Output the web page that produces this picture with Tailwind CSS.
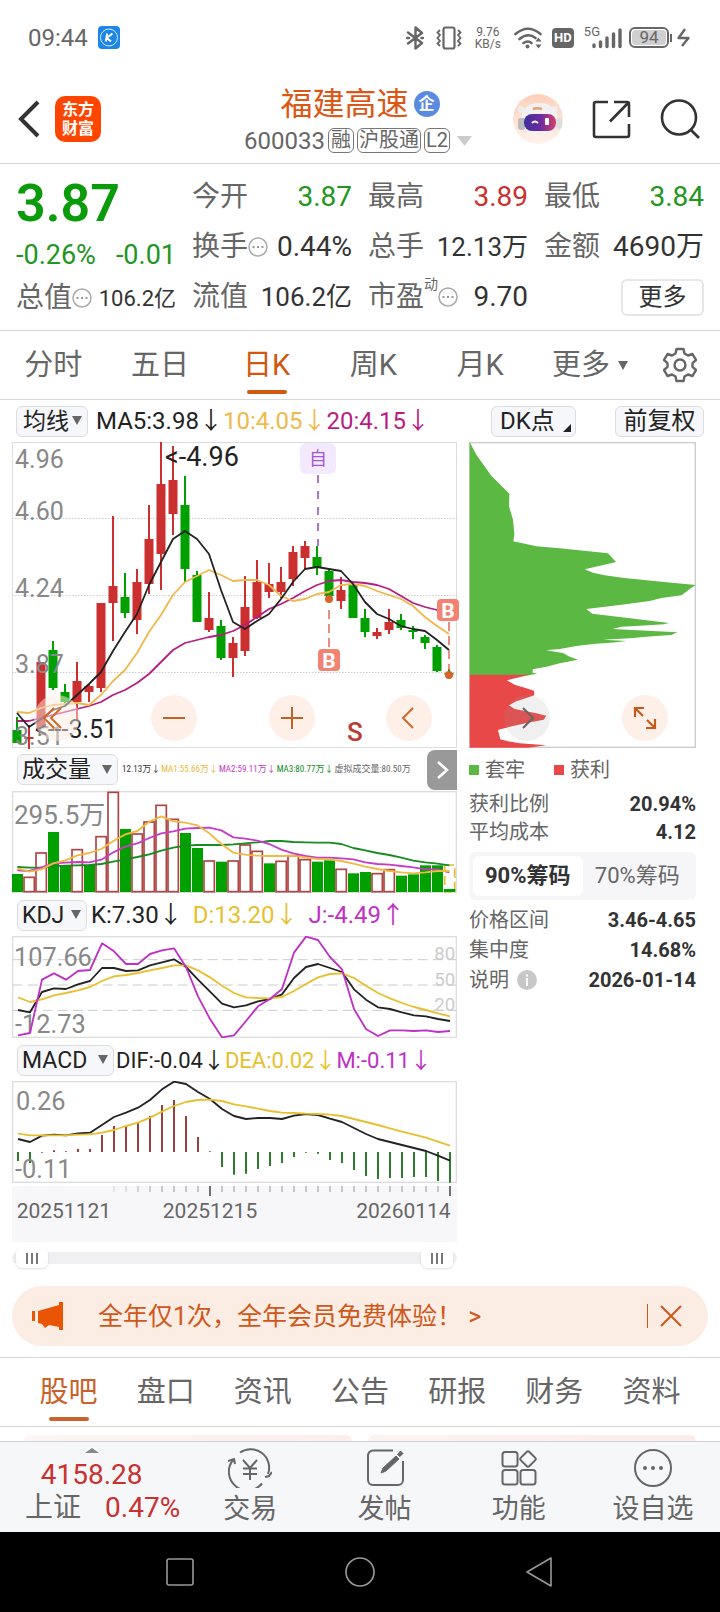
<!DOCTYPE html>
<html lang="zh-CN">
<head>
    <meta charset="UTF-8">
    <meta name="viewport" content="width=device-width, initial-scale=1.0">
    <title>福建高速 600033</title>
    <script src="https://cdn.jsdelivr.net/npm/@tailwindcss/browser@4"></script>
</head>
<body class="bg-white text-[#666] font-[Roboto,'Noto_Sans_CJK_SC',sans-serif] overflow-x-hidden">

    <!-- status bar -->
    <div class="flex items-center h-[75px] pl-7 pr-[30px]">
      <span class="text-2xl">09:44</span>
      <svg class="ml-[10px] w-[22px] h-[23px]" viewBox="0 0 22 23">
        <rect width="22" height="23" rx="4" fill="#1b86e8"/>
        <circle cx="11" cy="11.500" r="8.500" fill="none" stroke="#d6eaff" stroke-width="1"/>
        <path d="M9.200 7.500L7.800 15.500M14.500 7.500L8.800 12L13 15.500" fill="none" stroke="#fff" stroke-width="2"/>
      </svg>
      <div class="ml-auto flex items-center">
        <svg class="w-[18px] h-6" viewBox="0 0 18 24" fill="none" stroke="#666" stroke-width="2.400" stroke-linejoin="round" stroke-linecap="round"><path d="M2 6.500L16 17L9.500 22.500V1.500L16 7L2 17.500M1 12h2M15.500 12h1.500"/></svg>
        <svg class="ml-3 w-[26px] h-6" viewBox="0 0 26 24" fill="none" stroke="#666" stroke-width="2.200"><rect x="7.500" y="1.500" width="11" height="21" rx="2"/><path d="M4 4L1.500 6.500L4 9L1.500 12L4 15L1.500 17.500L4 20M22 4l2.500 2.500L22 9l2.500 3L22 15l2.500 2.500L22 20" stroke-width="1.800"/></svg>
        <div class="ml-3 w-7 text-xs leading-3 text-center">9.76<br>KB/s</div>
        <svg class="ml-3 w-[28px] h-6" viewBox="0 0 28 24" fill="none" stroke="#666" stroke-width="2.600" stroke-linecap="round"><path d="M1.500 8Q14-2.500 26.500 8M5.500 13Q14 6 21.500 12M9.500 17Q14 14 17.500 17"/><circle cx="13.500" cy="20.500" r="2" fill="#666" stroke="none"/><path d="M24.500 11.500l3 4h-6zM24.500 22.500l3-4h-6z" fill="#666" stroke="none"/></svg>
        <span class="ml-[10px] w-[22px] h-5 rounded-sm bg-[#666] text-white text-[13px] leading-5 font-bold text-center">HD</span>
        <span class="ml-[10px] text-[13px] leading-3 self-start">5G</span>
        <svg class="-ml-2 w-[30px] h-[22px]" viewBox="0 0 30 22" stroke="#666" stroke-width="3.400" stroke-linecap="round"><path d="M2 18v1.500M8.500 15v4.500M15 11v8.500M21.500 7v12.500M28 3v16.500"/></svg>
        <span class="ml-[7px] w-[40px] h-[21px] rounded-md border-2 border-[#666] p-px"><span class="block bg-[#d0d0d0] rounded-sm text-[17px] leading-[15px] text-center">94</span></span>
        <span class="w-[2px] h-2 bg-[#666] ml-px"></span>
        <svg class="ml-[5px] w-[13px] h-[19px]" viewBox="0 0 13 19" fill="none" stroke="#666" stroke-width="2.400" stroke-linejoin="round"><path d="M8 1L1.500 10H11.500L5 18"/></svg>
      </div>
    </div>

    <!-- header -->
    <header class="grid grid-cols-[1fr_auto_1fr] items-center h-[89px] border-b border-[#d8d8d8] pl-4 pr-5">
      <div class="flex items-center gap-[15px]">
        <button aria-label="返回"><svg class="w-6 h-10" viewBox="0 0 24 40" fill="none" stroke="#333" stroke-width="4"><path d="M22 3L5 20L22 37"/></svg></button>
        <button class="w-[46px] h-[46px] rounded-[10px] bg-[#ff4600] text-white text-base leading-[19px] font-bold">东方<br>财富</button>
      </div>
      <div class="flex flex-col items-center pt-[7px]">
        <h1 class="flex items-center gap-[5px] pl-1 text-[#dc5614] text-[32px] leading-9">福建高速<span class="w-[26px] h-[26px] rounded-full bg-[#5b8be0] text-white text-base leading-[25px] text-center font-bold">企</span></h1>
        <div class="flex items-center gap-[3px] text-2xl leading-[38px]">600033
          <span class="border border-[#777] rounded-md w-[26px] h-[25px] text-[20px] leading-[22px] text-center">融</span>
          <span class="border border-[#777] rounded-md w-[64px] h-[25px] text-[20px] leading-[22px] text-center">沪股通</span>
          <span class="border border-[#777] rounded-md w-[26px] h-[25px] text-[20px] leading-[23px] text-center">L2</span>
          <svg class="ml-1 w-[15px] h-[10px]" viewBox="0 0 15 10"><path d="M0 0h15L7.500 10z" fill="#ccc"/></svg>
        </div>
      </div>
      <div class="flex items-center justify-end gap-[29px]">
        <button aria-label="智能助手"><svg class="w-[50px] h-[50px]" viewBox="0 0 50 50">
          <defs><linearGradient id="visor"><stop offset="0" stop-color="#3d2f9a"/><stop offset="0.500" stop-color="#6a2aa0"/><stop offset="1" stop-color="#d2406a"/></linearGradient><linearGradient id="halo" x2="0" y2="1"><stop offset="0" stop-color="#fcd0bb"/><stop offset="1" stop-color="#fff3ec"/></linearGradient></defs>
          <circle cx="25" cy="25" r="25" fill="url(#halo)"/>
          <path d="M6 19Q3 10 9 12L16 17ZM44 19Q47 10 41 12L34 17Z" fill="#eee"/>
          <path d="M8 26Q9 9 26 9Q43 9 45 26Q44 41 26 41Q9 41 8 26Z" fill="#f2f0f0"/>
          <rect x="5" y="24" width="7" height="12" rx="3" fill="#bbb"/><rect x="43" y="24" width="6" height="11" rx="3" fill="#ddd"/>
          <rect x="11" y="20" width="32" height="17" rx="8" fill="url(#visor)"/>
          <path d="M20 15Q24 13.500 29 15" stroke="#e3a070" stroke-width="2.500" fill="none"/>
          <path d="M19 29q3-3 6 0" stroke="#fff" stroke-width="2" fill="none"/><rect x="32" y="24" width="4" height="7" rx="1" fill="#fff"/>
        </svg></button>
        <button aria-label="分享"><svg class="w-[39px] h-[39px]" viewBox="0 0 39 39" fill="none" stroke="#333" stroke-width="2.600"><path d="M16 2H4a2 2 0 0 0-2 2v31a2 2 0 0 0 2 2h31a2 2 0 0 0 2-2V24M22 2h13a2 2 0 0 1 2 2v13M37 2L18 21.500"/></svg></button>
        <button aria-label="搜索"><svg class="w-10 h-10" viewBox="0 0 40 40" fill="none" stroke="#333" stroke-width="2.600"><circle cx="19" cy="18.500" r="17"/><path d="M31 31L39 39"/></svg></button>
      </div>
    </header>

    <!-- quote -->
    <section class="grid grid-cols-4 gap-4 px-4 py-2 h-[167px] border-b border-[#d8d8d8] whitespace-nowrap">
      <div>
        <div class="h-[62px] leading-[64px] text-[52px] font-semibold text-[#0a9b0a]">3.87</div>
        <div class="h-10 leading-[42px] flex justify-between text-[27px] text-[#229522]"><span>-0.26%</span><span>-0.01</span></div>
        <div class="h-12 flex items-center justify-between"><span class="flex items-center text-[28px]">总值<svg class="w-5 h-5" viewBox="0 0 20 20"><circle cx="10" cy="10" r="9" fill="none" stroke="#aaa" stroke-width="1.500"/><path d="M4.500 9h2v2h-2zM9 9h2v2H9zM13.500 9h2v2h-2z" fill="#999"/></svg></span><span class="text-[22px] text-[#333]">106.2亿</span></div>
      </div>
      <div>
        <div class="h-[50px] flex items-center justify-between text-[28px]"><span>今开</span><span class="text-[#229522]">3.87</span></div>
        <div class="h-[50px] flex items-center justify-between text-[28px]"><span class="flex items-center">换手<svg class="w-5 h-5" viewBox="0 0 20 20"><circle cx="10" cy="10" r="9" fill="none" stroke="#aaa" stroke-width="1.500"/><path d="M4.500 9h2v2h-2zM9 9h2v2H9zM13.500 9h2v2h-2z" fill="#999"/></svg></span><span class="text-[#333]">0.44%</span></div>
        <div class="h-[50px] flex items-center justify-between text-[28px]"><span>流值</span><span class="text-[26px] text-[#333]">106.2亿</span></div>
      </div>
      <div>
        <div class="h-[50px] flex items-center justify-between text-[28px]"><span>最高</span><span class="text-[#c93030]">3.89</span></div>
        <div class="h-[50px] flex items-center justify-between text-[28px]"><span>总手</span><span class="text-[26px] text-[#333]">12.13万</span></div>
        <div class="h-[50px] flex items-center justify-between text-[28px]"><span class="flex items-center">市盈<span class="text-sm self-start leading-4">动</span><svg class="w-5 h-5" viewBox="0 0 20 20"><circle cx="10" cy="10" r="9" fill="none" stroke="#aaa" stroke-width="1.500"/><path d="M4.500 9h2v2h-2zM9 9h2v2H9zM13.500 9h2v2h-2z" fill="#999"/></svg></span><span class="text-[#333]">9.70</span></div>
      </div>
      <div>
        <div class="h-[50px] flex items-center justify-between text-[28px]"><span>最低</span><span class="text-[#229522]">3.84</span></div>
        <div class="h-[50px] flex items-center justify-between text-[28px]"><span>金额</span><span class="text-[#333]">4690万</span></div>
        <div class="h-[50px] flex items-center justify-end"><button class="w-[83px] h-[37px] rounded-md border-2 border-[#e6e6e6] text-2xl leading-8 text-[#333]">更多</button></div>
      </div>
    </section>

    <!-- period tabs -->
    <nav class="grid grid-cols-[1fr_1fr_1fr_1fr_1fr_1fr_80px] items-center h-[69px] border-b border-[#d8d8d8] text-[29px] leading-[66px]">
      <button>分时</button>
      <button>五日</button>
      <button class="relative text-[#d1590f]">日K<span class="absolute bottom-1 left-1/2 -translate-x-1/2 w-10 h-1 rounded-full bg-[#d1590f]"></span></button>
      <button>周K</button>
      <button>月K</button>
      <button class="flex items-center justify-end gap-2 pr-3">更多<svg class="w-[10px] h-[9px]" viewBox="0 0 10 9"><path d="M0 0h10L5 9z" fill="#666"/></svg></button>
      <button class="flex justify-center" aria-label="设置"><svg class="w-[34px] h-[36px]" viewBox="0 0 34 36" fill="none" stroke="#666" stroke-width="2.400" stroke-linejoin="round"><path d="M13.500 2h7l1 4.500 3.500 2 4.500-1.500 3.500 6-3.500 3.200v3.600l3.500 3.200-3.500 6-4.500-1.500-3.500 2-1 4.500h-7l-1-4.500-3.500-2L4.500 29 1 23l3.500-3.200v-3.600L1 13l3.500-6L9 8.500l3.500-2z"/><circle cx="17" cy="18" r="5.500"/></svg></button>
    </nav>

    <main class="pl-3 pr-4">
      <div class="flex items-center h-[42px] text-2xl whitespace-nowrap">
        <label class="relative ml-1">
          <select aria-label="主图指标" class="appearance-none w-[72px] h-[31px] pl-[6px] rounded-md border border-[#ddd] bg-[#f6f7fa] text-[23px] leading-7 text-[#222]"><option>均线</option></select>
          <svg class="absolute right-[6px] top-[11px] w-[10px] h-[9px] pointer-events-none" viewBox="0 0 10 9"><path d="M0 0h10L5 9z" fill="#666"/></svg>
        </label>
        <span class="ml-2 text-[#222]">MA5:3.98↓</span><span class="text-[#f0b84c]">10:4.05↓</span><span class="text-[#b81e82]">20:4.15↓</span>
        <button class="relative ml-auto w-[85px] h-[31px] pl-2 rounded-md border border-[#ddd] bg-[#f6f7fa] text-left leading-7 text-[#222]">DK点<svg class="absolute right-1 bottom-1 w-2 h-2" viewBox="0 0 8 8"><path d="M8 0v8H0z" fill="#222"/></svg></button>
        <button class="ml-[39px] w-[89px] h-[31px] rounded-md border border-[#ddd] bg-[#f6f7fa] leading-7 text-[#222]">前复权</button>
      </div>

      <div class="grid grid-cols-[445fr_235fr] gap-3">
        <div>
          <!-- candles -->
          <div class="relative">
            <svg class="block w-full overflow-visible" viewBox="12 442 445 306" font-size="25">
              <rect x="12.500" y="442.500" width="444" height="305" fill="none" stroke="#ddd"/>
              <path d="M12 518.500H457M12 595.500H457M12 672.500H457" stroke="#ccc" stroke-dasharray="1.500 1.500"/>
              <g id="candles"></g>
              <g fill="#888"><text x="15" y="468">4.96</text><text x="15" y="520">4.60</text><text x="15" y="597">4.24</text><text x="15" y="673">3.87</text><text x="15" y="745">3.51</text></g>
              <g fill="#222"><text x="165" y="466" font-size="27">&lt;-4.96</text><text x="35" y="738">&lt;---3.51</text></g>
              <rect x="300" y="443" width="36" height="31" rx="6" fill="#f3eaff"/>
              <text x="318" y="465" text-anchor="middle" font-size="18" fill="#a257d0">自</text>
              <path d="M318 475V546" stroke="#a56cc4" stroke-width="1.800" stroke-dasharray="8 8"/>
              <path d="M329 610V649M449 622V670" stroke="#e06a55" stroke-width="1.500" stroke-dasharray="9 5"/>
              <circle cx="329" cy="599" r="4" fill="#d8642a"/><circle cx="449" cy="675" r="4" fill="#d8642a"/>
              <rect x="318" y="649" width="22" height="22" rx="4" fill="#f28373"/><rect x="437" y="599" width="22" height="22" rx="4" fill="#f28373"/>
              <g fill="#fff" font-size="21" font-weight="700" text-anchor="middle"><text x="329" y="668">B</text><text x="448" y="618">B</text></g>
              <text x="347" y="741" font-size="26" font-weight="500" fill="#bb3a34">S</text>
            </svg>
            <div class="absolute bottom-[7px] left-[22px] right-[25px] flex justify-between">
              <button aria-label="最早" class="w-[46px] h-[46px] rounded-full bg-[#fdece3]/50"><svg viewBox="0 0 46 46" fill="none" stroke="#d1692b" stroke-width="2"><path d="M20 13L10 23L20 33M27 13L17 23L27 33"/></svg></button>
              <button aria-label="缩小" class="w-[46px] h-[46px] rounded-full bg-[#fef0e9]"><svg viewBox="0 0 46 46" stroke="#c0622a" stroke-width="2"><path d="M12 23H34"/></svg></button>
              <button aria-label="放大" class="w-[46px] h-[46px] rounded-full bg-[#fef0e9]"><svg viewBox="0 0 46 46" stroke="#c0622a" stroke-width="2"><path d="M12 23H34M23 12V34"/></svg></button>
              <button aria-label="向左" class="w-[46px] h-[46px] rounded-full bg-[#fef0e9]"><svg viewBox="0 0 46 46" fill="none" stroke="#d1692b" stroke-width="2"><path d="M27 13L17 23L27 33"/></svg></button>
            </div>
          </div>

          <!-- volume -->
          <div class="flex items-center h-[43px] whitespace-nowrap">
            <label class="relative ml-[5px]">
              <select aria-label="副图指标一" class="appearance-none w-[101px] h-[31px] pl-1 rounded-md border border-[#ddd] bg-[#f6f7fa] text-[23px] leading-7 text-[#222]"><option>成交量</option></select>
              <svg class="absolute right-[6px] top-[11px] w-[10px] h-[9px] pointer-events-none" viewBox="0 0 10 9"><path d="M0 0h10L5 9z" fill="#666"/></svg>
            </label>
            <div class="flex gap-px ml-1 text-[9px] font-['Roboto_Condensed','Liberation_Sans_Narrow',Roboto,'Noto_Sans_CJK_SC',sans-serif]">
              <span class="text-[#333]">12.13万↓</span><span class="text-[#e8b93c]">MA1:55.66万↓</span><span class="text-[#bf3cc4]">MA2:59.11万↓</span><span class="text-[#0d8a1c]">MA3:80.77万↓</span><span>虚拟成交量:80.50万</span>
            </div>
            <button aria-label="展开" class="ml-auto w-[30px] h-10 rounded-l-lg bg-[#999]"><svg viewBox="0 0 30 40" fill="none" stroke="#fff" stroke-width="2.600"><path d="M11 12L20 20L11 28"/></svg></button>
          </div>
          <svg class="block w-full" viewBox="36 123 1335 306" font-size="78">
            <rect x="38" y="125" width="1331" height="302" fill="none" stroke="#ddd" stroke-width="4"/>
            <text x="42" y="222" fill="#888">295.5万</text>
            <g id="volume"></g>
          </svg>

          <!-- KDJ -->
          <div class="flex items-center h-[43px] pt-px text-2xl whitespace-nowrap">
            <label class="relative ml-[5px]">
              <select aria-label="副图指标二" class="appearance-none w-[70px] h-[31px] pl-1 rounded-md border border-[#ddd] bg-[#f6f7fa] text-[23px] leading-7 text-[#222]"><option>KDJ</option></select>
              <svg class="absolute right-[6px] top-[11px] w-[10px] h-[9px] pointer-events-none" viewBox="0 0 10 9"><path d="M0 0h10L5 9z" fill="#666"/></svg>
            </label>
            <div class="flex gap-[10px] ml-1"><span class="text-[#222]">K:7.30↓</span><span class="text-[#e8bf2f]">D:13.20↓</span><span class="text-[#bf30c6]">J:-4.49↑</span></div>
          </div>
          <svg class="block w-full" viewBox="36 557 1335 306" font-size="76">
            <rect x="38" y="559" width="1331" height="302" fill="none" stroke="#ddd" stroke-width="4"/>
            <path d="M38 628H1369M38 704H1369M38 780H1369" stroke="#ccc" stroke-width="3" stroke-dasharray="30 15"/>
            <g fill="#888"><text x="42" y="647">107.66</text><text x="45" y="848">-12.73</text></g>
            <g fill="#ccc" font-size="56"><text x="1303" y="630">80</text><text x="1303" y="706">50</text><text x="1303" y="782">20</text></g>
            <g id="kdj"></g>
          </svg>

          <!-- MACD -->
          <div class="flex items-center h-[43px] pt-px text-[22px] whitespace-nowrap">
            <label class="relative ml-[5px]">
              <select aria-label="副图指标三" class="appearance-none w-[97px] h-[31px] pl-1 rounded-md border border-[#ddd] bg-[#f6f7fa] text-[23px] leading-7 text-[#222]"><option>MACD</option></select>
              <svg class="absolute right-[6px] top-[11px] w-[10px] h-[9px] pointer-events-none" viewBox="0 0 10 9"><path d="M0 0h10L5 9z" fill="#666"/></svg>
            </label>
            <div class="flex ml-[2px]"><span class="text-[#222]">DIF:-0.04↓</span><span class="text-[#e8bf2f]">DEA:0.02↓</span><span class="text-[#bf30c6]">M:-0.11↓</span></div>
          </div>
          <svg class="block w-full" viewBox="36 138 1335 306" font-size="76">
            <rect x="38" y="140" width="1331" height="302" fill="none" stroke="#ddd" stroke-width="4"/>
            <g id="macd"></g>
            <g fill="#888"><text x="48" y="226">0.26</text><text x="45" y="429">-0.11</text></g>
          </svg>

          <!-- time axis -->
          <svg class="block w-full mt-[3px] bg-[#f7f7fa]" viewBox="36 453 1335 168" font-size="63" fill="#666">
            <g id="ticks"></g>
            <text x="50" y="549">20251121</text><text x="630" y="549" text-anchor="middle">20251215</text><text x="1352" y="549" text-anchor="end">20260114</text>
          </svg>
          <div class="relative mt-[6px] h-5">
            <div class="absolute inset-x-0 top-1 h-3 rounded-full bg-[#f0f0f3]"></div>
            <input type="range" value="0" aria-label="起始日期" class="absolute inset-x-1 top-0 h-5 w-[calc(100%-8px)] appearance-none bg-transparent pointer-events-none [&::-webkit-slider-thumb]:pointer-events-auto [&::-webkit-slider-thumb]:appearance-none [&::-webkit-slider-thumb]:w-8 [&::-webkit-slider-thumb]:h-5 [&::-webkit-slider-thumb]:rounded-md [&::-webkit-slider-thumb]:shadow [&::-webkit-slider-thumb]:bg-white [&::-webkit-slider-thumb]:bg-[repeating-linear-gradient(90deg,#777_0_2px,transparent_2px_5px)] [&::-webkit-slider-thumb]:bg-[length:12px_11px] [&::-webkit-slider-thumb]:bg-center [&::-webkit-slider-thumb]:bg-no-repeat">
            <input type="range" value="100" aria-label="结束日期" class="absolute inset-x-1 top-0 h-5 w-[calc(100%-8px)] appearance-none bg-transparent pointer-events-none [&::-webkit-slider-thumb]:pointer-events-auto [&::-webkit-slider-thumb]:appearance-none [&::-webkit-slider-thumb]:w-8 [&::-webkit-slider-thumb]:h-5 [&::-webkit-slider-thumb]:rounded-md [&::-webkit-slider-thumb]:shadow [&::-webkit-slider-thumb]:bg-white [&::-webkit-slider-thumb]:bg-[repeating-linear-gradient(90deg,#777_0_2px,transparent_2px_5px)] [&::-webkit-slider-thumb]:bg-[length:12px_11px] [&::-webkit-slider-thumb]:bg-center [&::-webkit-slider-thumb]:bg-no-repeat">
          </div>
        </div>

        <!-- chip distribution -->
        <aside class="pr-2 text-xl">
          <div class="relative">
            <svg class="block w-full" viewBox="28 142 681 918">
              <rect x="30" y="144" width="677" height="914" fill="none" stroke="#ccc" stroke-width="4"/>
              <path d="M30 142L50 180L95 243L149 297L148 335L160 375L164 418L161 440L230 455L300 461L445 476L469 502L415 515L375 524L400 534L435 542L494 550L590 560L708 571L690 583L666 602L605 610L570 619L480 631L380 643L398 657L530 673L628 685L612 689L540 693L485 696L458 703L578 709L653 713L635 721L578 725L510 731L430 735L501 739L470 743L400 748L350 754L300 763L259 767L310 775L330 786L355 795L300 806L260 816L219 824L219 834L233 837L205 842H30Z" fill="#5bb843"/>
              <path d="M30 840H212L185 846L142 857L165 870L195 879L223 888L224 902L200 910L170 920L148 932L165 943L230 956L260 963L252 975L205 984L160 994L115 1006L122 1034L145 1040L180 1046L260 1052L205 1059H30Z" fill="#e84848"/>
            </svg>
            <div class="absolute bottom-[7px] left-[35px] right-[28px] flex justify-between">
              <button aria-label="收起筹码" class="w-[46px] h-[46px] rounded-full bg-[#999]/15"><svg viewBox="0 0 46 46" fill="none" stroke="#666" stroke-width="2"><path d="M19 13L29 23L19 33"/></svg></button>
              <button aria-label="全屏" class="w-[46px] h-[46px] rounded-full bg-[#fef0e9]"><svg viewBox="0 0 46 46" fill="none" stroke="#c9591b" stroke-width="2.200"><path d="M22 13H13V22M13 13L21 21M33 24V33H24M33 33L25 25"/></svg></button>
            </div>
          </div>
          <div class="flex items-center h-[42px] pt-[2px]"><span class="w-[10px] h-[10px] bg-[#5bb843] mr-[6px]"></span>套牢<span class="w-[10px] h-[10px] bg-[#e84848] ml-[29px] mr-[6px]"></span>获利</div>
          <div class="flex justify-between h-7 leading-7"><span>获利比例</span><b class="text-[#333]">20.94%</b></div>
          <div class="flex justify-between h-7 leading-7"><span>平均成本</span><b class="text-[#333]">4.12</b></div>
          <div class="flex mt-[6px] p-1 h-12 rounded-md bg-[#f6f6f9] text-[22px]">
            <button class="flex-1 rounded-md bg-white font-bold text-[#333] leading-10">90%筹码</button><button class="flex-1 leading-10">70%筹码</button>
          </div>
          <div class="flex justify-between mt-[5px] h-[30px] leading-[30px]"><span>价格区间</span><b class="text-[#333]">3.46-4.65</b></div>
          <div class="flex justify-between h-[30px] leading-[30px]"><span>集中度</span><b class="text-[#333]">14.68%</b></div>
          <div class="flex justify-between h-[30px] leading-[30px]"><span class="flex items-center gap-2">说明<svg class="w-5 h-5" viewBox="0 0 20 20"><circle cx="10" cy="10" r="10" fill="#c8c8c8"/><path d="M9 4.500h2v2H9zM9 8h2v8H9z" fill="#fff"/></svg></span><b class="text-[#333]">2026-01-14</b></div>
        </aside>
      </div>
    </main>

    <!-- promo -->
    <div class="flex items-center mx-3 mt-[18px] h-[60px] rounded-full bg-[#fcede4] pl-5 pr-[26px] text-[#d0571a]">
      <svg class="w-8 h-7" viewBox="0 0 32 28" fill="#ea5504"><path d="M0 9h3v10H0zM6 9L27 3V0h4v28h-4v-3l-10-2-4 3-3-4-4-1z"/></svg>
      <a href="#" class="ml-[34px] pt-[2px] text-[25px]">全年仅1次，全年会员免费体验！ &gt;</a>
      <span class="ml-auto w-px h-6 bg-[#d0571a]"></span>
      <button aria-label="关闭" class="ml-3"><svg class="w-[22px] h-[22px]" viewBox="0 0 22 22" fill="none" stroke="#d0571a" stroke-width="2"><path d="M1 1L21 21M21 1L1 21"/></svg></button>
    </div>

    <!-- content tabs -->
    <nav class="flex mt-[11px] h-[70px] px-5 border-y border-[#d8d8d8] text-[29px] leading-[66px]">
      <button class="flex-1 relative text-[#c9622a]">股吧<span class="absolute bottom-[5px] left-1/2 -translate-x-1/2 w-10 h-1 rounded-full bg-[#c9622a]"></span></button>
      <button class="flex-1">盘口</button>
      <button class="flex-1">资讯</button>
      <button class="flex-1">公告</button>
      <button class="flex-1">研报</button>
      <button class="flex-1">财务</button>
      <button class="flex-1">资料</button>
    </nav>
    <div class="grid grid-cols-2 gap-4 px-6 pt-2 h-[14px]">
      <div class="rounded-t-xl bg-linear-to-r from-[#fdf5f3] to-[#fdeeec]"></div>
      <div class="rounded-t-xl bg-linear-to-r from-[#fdf3f1] to-[#fdecea]"></div>
    </div>

    <!-- bottom bar -->
    <footer class="grid grid-cols-[183fr_134fr_134fr_134fr_134fr] h-[91px] border-t border-[#d0d0d4] bg-[#f6f7f9] text-[27px]">
      <button class="relative flex flex-col items-center pt-4 text-[28px] leading-[33px] text-[#c93030]">
        <svg class="absolute top-[6px] left-1/2 -translate-x-1/2 w-[14px] h-[5px]" viewBox="0 0 14 5"><path d="M0 5L7 0L14 5z" fill="#888"/></svg>
        <span>4158.28</span>
        <span class="flex gap-[24px] pl-[22px]"><span class="text-[#666]">上证</span>0.47%</span>
      </button>
      <button class="flex flex-col items-center pt-[6px] leading-[43px]"><svg class="w-[44px] h-10" viewBox="0 0 44 40" fill="none" stroke="#666" stroke-width="2"><path d="M12 4.500A18.500 18.500 0 0 1 40 26M34 35.500A18.500 18.500 0 0 1 5 12M0 13l6-2 1 5M37 29l4-1 3-4M15 12l7 8 7-8M22 20v12M15 20.500h14M15 26h14"/></svg>交易</button>
      <button class="flex flex-col items-center pt-[6px] leading-[43px]"><svg class="w-10 h-10" viewBox="0 0 40 40" fill="none" stroke="#666" stroke-width="2"><path d="M28 2.500H8a5 5 0 0 0-5 5V32a5 5 0 0 0 5 5H33a5 5 0 0 0 5-5V13"/><path d="M16 25l2-5L31 8l3 3-13 12zM32.500 6.500l3-3.500 2.500 2.500-3 3z" fill="#666" stroke-width="1"/></svg>发帖</button>
      <button class="flex flex-col items-center pt-[6px] leading-[43px]"><svg class="w-10 h-10" viewBox="0 0 40 40" fill="none" stroke="#666" stroke-width="2"><rect x="3.500" y="4" width="15" height="14.500" rx="2.500"/><rect x="3.500" y="22" width="15" height="14.500" rx="2.500"/><rect x="21.500" y="22" width="15" height="14.500" rx="2.500"/><rect x="23" y="5" width="12" height="12" rx="2" transform="rotate(45 29 11)"/></svg>功能</button>
      <button class="flex flex-col items-center pt-[6px] leading-[43px]"><svg class="w-10 h-10" viewBox="0 0 40 40"><circle cx="20" cy="20" r="18" fill="none" stroke="#666" stroke-width="2"/><circle cx="12" cy="20" r="2" fill="#666"/><circle cx="20" cy="20" r="2" fill="#666"/><circle cx="28" cy="20" r="2" fill="#666"/></svg>设自选</button>
    </footer>
    <div class="grid grid-cols-3 justify-items-center items-center h-20 px-[90px] bg-black">
      <button aria-label="最近任务"><svg class="w-7 h-7" viewBox="0 0 28 28" fill="none" stroke="#999" stroke-width="1.600"><rect x="1" y="1" width="26" height="26" rx="2"/></svg></button>
      <button aria-label="主页"><svg class="w-[30px] h-[30px]" viewBox="0 0 30 30" fill="none" stroke="#999" stroke-width="1.600"><circle cx="15" cy="15" r="14"/></svg></button>
      <button aria-label="返回上页"><svg class="w-[30px] h-[30px]" viewBox="0 0 30 30" fill="none" stroke="#999" stroke-width="1.600" stroke-linejoin="round"><path d="M26 1V29L2 15z"/></svg></button>
    </div>

    <script>
      const RED = "#cc2f2f";
      const GREEN = "#00a000";

      // [up?, high, low, body top, body bottom]
      const candles = [
        [0,717,743,730,743],[1,725,749,737,739],[1,662,728,662,728],[0,641,690,650,688],[0,684,703,692,702],
        [1,662,720,681,702],[1,684,702,686,692],[1,603,692,603,688],[1,516,641,586,603],[0,573,618,597,613],
        [1,569,634,582,620],[1,505,594,539,584],[1,442,590,484,554],[1,446,535,480,514],[0,476,582,505,569],
        [0,571,622,575,622],[1,592,632,618,630],[0,620,660,626,658],[1,637,677,643,658],[1,576,656,607,651],
        [1,560,619,582,618],[1,563,598,584,592],[1,567,598,582,592],[1,546,586,552,579],[1,541,569,546,558],
        [0,546,575,557,568],[0,570,599,571,596],[1,577,609,590,601],[0,584,618,584,618],[0,609,637,618,632],
        [1,628,639,632,636],[1,609,634,622,630],[0,614,630,620,628],[0,626,639,630,632],[0,635,649,637,643],
        [0,645,672,647,671],[0,669,679,673,675]
      ];
      const ma5 = [713,727,719,710,706,695,684,672,651,632,614,585,562,539,531,539,554,590,622,629,621,614,599,582,569,567,569,571,584,602,614,619,626,629,631,640,650];
      const ma10 = [712,713,708,705,704,703,705,695,681,670,653,632,615,595,582,576,570,575,581,580,580,585,596,601,599,594,592,585,584,586,591,595,599,606,617,626,634];
      const ma20 = [721,721,718,715,712,709,706,702,695,690,683,674,662,650,643,640,637,635,631,625,617,609,604,598,591,585,581,580,582,583,585,589,596,603,607,610,612];

      const vol = [372,380,307,246,347,297,345,258,125,237,250,214,164,206,249,294,331,335,331,283,302,340,332,315,327,335,331,356,370,366,369,357,377,373,346,346,345];
      const volUp = "0110010110111100101110111001001100000";
      const vma1 = [355,365,358,340,331,316,309,297,273,253,243,215,199,214,218,226,250,282,308,314,317,318,318,317,322,327,328,333,341,350,357,363,367,370,367,363,363];
      const vma2 = [361,363,352,340,338,336,337,329,307,290,280,264,250,244,236,234,233,241,262,266,272,282,299,310,318,323,323,325,328,337,342,344,348,352,358,358,367];
      const vma3 = [351,353,353,349,347,346,345,342,335,328,321,313,302,293,287,285,285,285,283,280,277,273,273,276,277,278,278,282,294,301,309,315,323,332,337,341,346];

      const k = [779,786,725,714,716,702,692,653,653,662,660,645,636,627,650,688,724,760,771,765,753,746,732,683,650,641,653,665,717,748,771,776,786,795,798,806,812];
      const d = [741,755,747,735,728,720,710,692,678,674,668,660,653,645,645,660,681,706,728,741,743,744,740,722,701,681,671,669,683,706,728,744,758,770,779,789,798];
      const j = [855,848,688,669,688,662,659,579,603,641,641,611,600,594,650,738,806,861,855,812,768,746,716,607,559,569,620,657,776,836,857,840,840,842,840,845,842];

      const dif = [312,321,302,299,301,295,293,270,246,233,218,195,163,140,147,171,192,222,243,252,249,249,252,242,237,240,251,261,279,297,312,321,330,339,348,362,377];
      const dea = [296,301,301,301,301,299,298,293,285,273,263,248,230,213,201,195,194,198,208,214,221,228,233,234,236,237,239,243,252,261,270,280,290,299,308,320,332];
      const hist = [378,384,353,346,349,342,342,300,273,273,263,243,210,195,243,306,349,396,419,416,402,393,384,366,353,356,375,384,405,423,432,429,429,426,426,438,443];

      function line(values, x0, step, color, width) {
        const pts = values.map((y, i) => `${x0 + step * i},${y}`).join(" ");
        return `<polyline points="${pts}" fill="none" stroke="${color}" stroke-width="${width}" stroke-linejoin="round"/>`;
      }

      // price panel: one candle every 12 units
      document.getElementById("candles").innerHTML = candles.map(([up, hi, lo, top, bottom], i) => {
        const x = 17 + 12 * i;
        const c = up ? RED : GREEN;
        return `<path d="M${x} ${hi}V${lo}" stroke="${c}" stroke-width="2"/><rect x="${x - 4.5}" y="${top}" width="9" height="${bottom - top}" fill="${c}"/>`;
      }).join("") + line(ma20, 17, 12, "#b81e82", 1.8) + line(ma10, 17, 12, "#f0b84c", 1.8) + line(ma5, 17, 12, "#222", 1.8);

      // sub panels: one bar every 36 units
      document.getElementById("volume").innerHTML = vol.map((y, i) => {
        const x = 36 + 36 * i;
        if (i === 36) {
          return `<rect x="${x + 2}" y="${y}" width="30" height="80" fill="#fff" stroke="#e8b92f" stroke-width="5" stroke-dasharray="28 12"/><rect x="${x}" y="417" width="34" height="9" fill="${GREEN}"/>`;
        }
        return volUp[i] === "1"
          ? `<rect x="${x}" y="${y + 2}" width="31" height="${423 - y}" fill="#fff" fill-opacity="0.8" stroke="#b04444" stroke-width="5"/>`
          : `<rect x="${x}" y="${y}" width="33" height="${426 - y}" fill="${GREEN}"/>`;
      }).join("") + line(vma3, 52, 36, "#178a20", 5.5) + line(vma2, 52, 36, "#c53cc8", 5.5) + line(vma1, 52, 36, "#f0b940", 5.5);

      document.getElementById("kdj").innerHTML = line(k, 54, 36, "#222", 5.5) + line(d, 54, 36, "#e8bf2f", 5.5) + line(j, 54, 36, "#bf30c6", 5.5);

      document.getElementById("macd").innerHTML = hist.map((y, i) =>
        `<path d="M${54 + 36 * i} 351V${y}" stroke="${y < 351 ? "#964040" : "#2c7d2c"}" stroke-width="6"/>`
      ).join("") + line(dif, 54, 36, "#222", 5.5) + line(dea, 54, 36, "#e8bf2f", 5.5);

      let ticks = "";
      for (let i = 8; i < 37; i++) {
        const major = i === 16 || i === 36;
        ticks += `<path d="M${54 + 36 * i} 453V${major ? 483 : 471}" stroke="${major ? "#555" : "#bbb"}" stroke-width="5" opacity="${Math.min(1, (i - 6) / 6)}"/>`;
      }
      document.getElementById("ticks").innerHTML = ticks;
    </script>
</body>
</html>
